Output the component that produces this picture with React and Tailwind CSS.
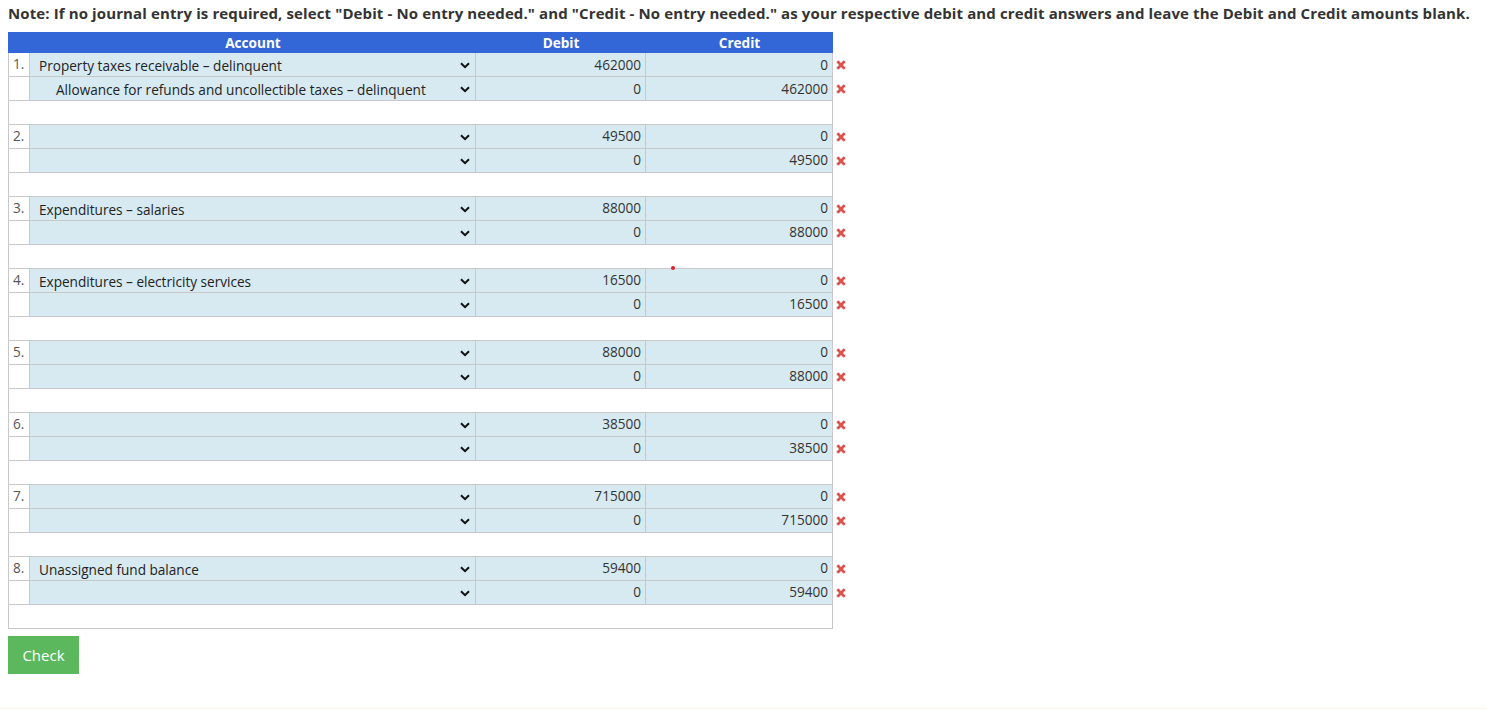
import React from 'react';

// journal entries, each one is two lines and a blank spacer line
const entries = [
    { debit: ['Property taxes receivable – delinquent', '462000', '0'], credit: ['Allowance for refunds and uncollectible taxes – delinquent', '0', '462000'] },
    { debit: ['', '49500', '0'], credit: ['', '0', '49500'] },
    { debit: ['Expenditures – salaries', '88000', '0'], credit: ['', '0', '88000'] },
    { debit: ['Expenditures – electricity services', '16500', '0'], credit: ['', '0', '16500'] },
    { debit: ['', '88000', '0'], credit: ['', '0', '88000'] },
    { debit: ['', '38500', '0'], credit: ['', '0', '38500'] },
    { debit: ['', '715000', '0'], credit: ['', '0', '715000'] },
    { debit: ['Unassigned fund balance', '59400', '0'], credit: ['', '0', '59400'] },
];

const Chevron = () => (
    <svg width="10" height="7" viewBox="0 0 10 7" className="mt-[1px] shrink-0">
        <path d="M1 1.2 L5 5.2 L9 1.2" fill="none" stroke="#111" strokeWidth="2" />
    </svg>
);

const Cross = () => (
    <svg width="10" height="10" viewBox="0 0 10 10">
        <path d="M1.3 1.3 L8.7 8.7 M8.7 1.3 L1.3 8.7" fill="none" stroke="#d9534f" strokeWidth="2.8" />
    </svg>
);

const Line = ({ num, account, indent, debit, credit, first }) => (
    <div className="flex h-6">
        <div className="flex w-[825px] border-b border-l border-[#c8c8c8]">
            <div className="w-[21px] shrink-0 border-r border-[#c8c8c8] pl-[4px] text-[#555] leading-[22px]">{num}</div>
            <div className="flex w-[446px] shrink-0 items-center justify-between border-r border-[#c8c8c8] bg-[#d7eaf2] pr-[5px]">
                <span className={indent ? 'pt-[4px] pl-[26px] text-[#222]' : 'pt-[4px] pl-[9px] text-[#222]'}>{account}</span>
                <Chevron />
            </div>
            <div className={first ? 'w-[170px] shrink-0 border-r border-[#c8c8c8] bg-[#d7eaf2] pr-[4px] text-right leading-[24px]' : 'w-[170px] shrink-0 border-r border-[#c8c8c8] bg-[#d7eaf2] pr-[4px] text-right leading-[22px]'}>{debit}</div>
            <div className={first ? 'flex-1 border-r border-[#c8c8c8] bg-[#d7eaf2] pr-[4px] text-right leading-[24px]' : 'flex-1 border-r border-[#c8c8c8] bg-[#d7eaf2] pr-[4px] text-right leading-[22px]'}>{credit}</div>
        </div>
        <div className="flex items-center pl-[3px]"><Cross /></div>
    </div>
);

export default function App() {
    return (
        <div className="relative h-[709px] overflow-hidden bg-white font-['Open_Sans',sans-serif] text-[13.6px] text-[#333]">
            <div className="px-2 pt-[3px]">
                <p className="text-[15px] leading-[20px] font-bold tracking-[0.115px] whitespace-nowrap text-[#333]">
                    Note: If no journal entry is required, select "Debit - No entry needed." and "Credit - No entry needed." as your respective debit and credit answers and leave the Debit and Credit amounts blank.
                </p>

                <div className="mt-[9px] flex h-[21px] w-[825px] bg-[#3366d6] leading-[21px] font-bold text-white">
                    <div className="w-[22px] shrink-0" />
                    <div className="w-[446px] shrink-0 text-center">Account</div>
                    <div className="w-[170px] shrink-0 text-center">Debit</div>
                    <div className="flex-1 text-center">Credit</div>
                </div>

                {entries.map((entry, i) => (
                    <div key={i}>
                        <Line num={`${i + 1}.`} account={entry.debit[0]} debit={entry.debit[1]} credit={entry.debit[2]} first={i === 0} />
                        <Line account={entry.credit[0]} indent debit={entry.credit[1]} credit={entry.credit[2]} first={i === 0} />
                        <div className="h-6 w-[825px] border-x border-b border-[#c8c8c8]" />
                    </div>
                ))}

                <button className="mt-[7px] h-[38px] w-[71px] bg-[#5cb85c] text-[15px] text-white">Check</button>
            </div>

            {/* stray red dot over the table */}
            <div className="absolute top-[266px] left-[671px] h-[4px] w-[4px] rounded-full bg-[#e0202a]" />
            <div className="absolute bottom-0 left-0 h-px w-full bg-[#fdf3e3]" />
        </div>
    );
}
